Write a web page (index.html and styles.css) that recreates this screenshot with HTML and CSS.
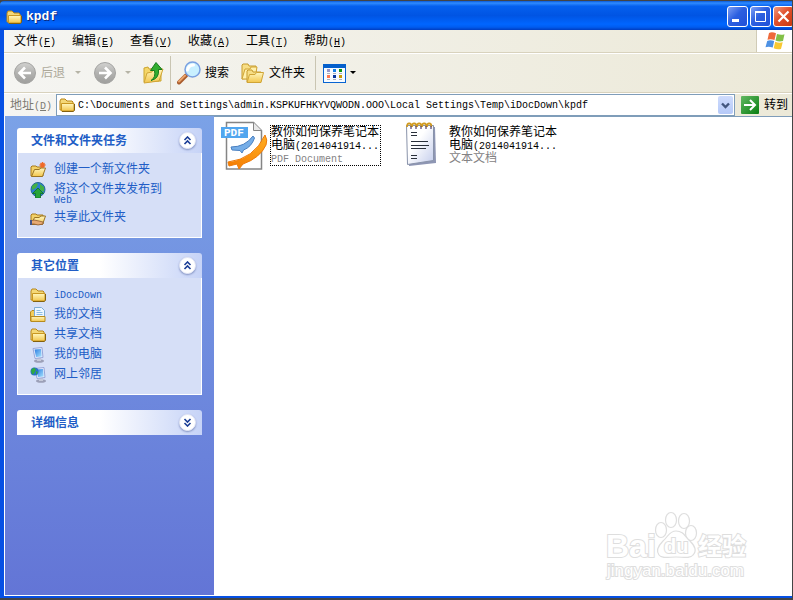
FILE: index.html
```html
<!DOCTYPE html>
<html lang="zh-CN">
<head>
<meta charset="utf-8">
<title>kpdf</title>
<link rel="stylesheet" href="styles.css">
</head>
<body>
<svg class="defs" aria-hidden="true">
  <defs>
    <linearGradient id="gold" x1="0" y1="0" x2="0" y2="1"><stop offset="0" stop-color="#fff7c0"/><stop offset="1" stop-color="#f3c64c"/></linearGradient>
    <linearGradient id="screen" x1="0" y1="0" x2="1" y2="1"><stop offset="0" stop-color="#2a7be0"/><stop offset="1" stop-color="#a8e4ff"/></linearGradient>
    <linearGradient id="grey" x1="0" y1="0" x2="0" y2="1"><stop offset="0" stop-color="#d2d2d0"/><stop offset=".5" stop-color="#b2b2b0"/><stop offset="1" stop-color="#9e9e9c"/></linearGradient>
    <linearGradient id="orange" x1="0" y1="1" x2="1" y2="0"><stop offset="0" stop-color="#f47a00"/><stop offset="1" stop-color="#ffac20"/></linearGradient>
    <linearGradient id="go" x1="0" y1="0" x2="1" y2="1"><stop offset="0" stop-color="#62b862"/><stop offset="1" stop-color="#087e10"/></linearGradient>
    <linearGradient id="pad" x1="0" y1="0" x2="1" y2="1"><stop offset=".4" stop-color="#fff"/><stop offset="1" stop-color="#c4cdec"/></linearGradient>
    <symbol id="folder" viewBox="0 0 16 16">
      <path d="M1 13V4l1-2h4l2 2h5l1 1v8z" fill="#f4d878" stroke="#b88618"/>
      <path d="M2.500 6.500h12.500v6.500l-1 1H2.500z" fill="url(#gold)" stroke="#c99721"/>
      <path d="M3 14.500h11.500l1-1V7" fill="none" stroke="#84610f"/>
    </symbol>
    <symbol id="openfolder" viewBox="0 0 16 16">
      <path d="M1 14V5l1-1h4l1 1h6v9z" fill="#f2d168" stroke="#a97a1a"/>
      <path d="M1.500 14.500l3-7H9l2-1.500h4.500l-3 8.500z" fill="url(#gold)" stroke="#9a7425"/>
    </symbol>
    <symbol id="up" viewBox="0 0 9 9"><path d="M1.500 4l3-3 3 3M1.500 8l3-3 3 3" fill="none" stroke="#1a3d96" stroke-width="1.600"/></symbol>
    <symbol id="down" viewBox="0 0 9 9"><path d="M1.500 1l3 3 3-3M1.500 5l3 3 3-3" fill="none" stroke="#1a3d96" stroke-width="1.600"/></symbol>
    <symbol id="monitor" viewBox="0 0 16 16">
      <ellipse cx="9" cy="14" rx="5" ry="1.800" fill="#9ca0b8"/>
      <path d="M7 10l4 1v3H7z" fill="#c6cada"/>
      <path d="M3 1.500l9-1 1 10-8 1z" fill="#e9efff" stroke="#98a6d8"/>
      <path d="M4.500 2.500l6.500-.6.7 7.500-5.700.7z" fill="url(#screen)"/>
    </symbol>
  </defs>
</svg>
<div class="window">
  <header class="titlebar">
    <svg class="i16"><use href="#folder"/></svg>
    <h1>kpdf</h1>
    <div class="controls">
      <button class="ctl" aria-label="最小化"><svg viewBox="0 0 19 19"><path d="M4 12h7v3H4z" fill="#fff"/></svg></button>
      <button class="ctl" aria-label="最大化"><svg viewBox="0 0 19 19"><path d="M4.500 5h10v9.500h-10z" fill="none" stroke="#fff"/><path d="M4 4h11v2H4z" fill="#fff"/></svg></button>
      <button class="ctl close" aria-label="关闭"><svg viewBox="0 0 19 19"><path d="M4.500 4.500l10 10M14.500 4.500l-10 10" stroke="#fff" stroke-width="2.200"/></svg></button>
    </div>
  </header>

  <div class="client">
    <nav class="menubar">
      <button>文件<span class="lat">(<u>F</u>)</span></button>
      <button>编辑<span class="lat">(<u>E</u>)</span></button>
      <button>查看<span class="lat">(<u>V</u>)</span></button>
      <button>收藏<span class="lat">(<u>A</u>)</span></button>
      <button>工具<span class="lat">(<u>T</u>)</span></button>
      <button>帮助<span class="lat">(<u>H</u>)</span></button>
      <div class="flag">
        <svg viewBox="0 0 20 18">
          <path d="M4 1q3-1.500 7 .3L9.500 8q-4-1.500-7-.2z" fill="#ee6a3c"/>
          <path d="M12 2q4 1.500 7.500.3L18 9q-4 1-7.500-.5z" fill="#82c048"/>
          <path d="M2.200 9q3-1.500 7 .1L7.700 15.500q-4-1.500-7.200-.3z" fill="#4d91e4"/>
          <path d="M10.200 9.800q4 1.500 7.500.5L16 17q-4 1-7.300-.8z" fill="#f8c832"/>
        </svg>
      </div>
    </nav>

    <div class="toolbar">
      <button class="tool dim" disabled>
        <svg class="i24" viewBox="0 0 24 24"><circle cx="12" cy="12" r="10.500" fill="url(#grey)" stroke="#a4a4a2"/><path d="M18 12H7M12 6.500L6.500 12l5.500 5.500" fill="none" stroke="#fff" stroke-width="2.600"/></svg>
        后退
      </button>
      <button class="drop" aria-label="后退列表" disabled><svg viewBox="0 0 6 4"><path d="M0 0h6L3 3z" fill="#b6b4a6"/></svg></button>
      <button class="tool" aria-label="前进" disabled>
        <svg class="i24" viewBox="0 0 24 24"><circle cx="12" cy="12" r="10.500" fill="url(#grey)" stroke="#a4a4a2"/><path d="M6 12h11M12 6.500l5.500 5.500-5.500 5.500" fill="none" stroke="#fff" stroke-width="2.600"/></svg>
      </button>
      <button class="drop last" aria-label="前进列表" disabled><svg viewBox="0 0 6 4"><path d="M0 0h6L3 3z" fill="#b6b4a6"/></svg></button>
      <button class="tool parent" aria-label="向上">
        <svg class="i24" viewBox="0 0 24 24">
          <path d="M3 21V7l4-1 1 2 12-1v13z" fill="#f5d668" stroke="#cba52f"/>
          <path d="M3 22l3-10 5-1 1-2 10-1-4 12z" fill="url(#gold)" stroke="#d1a637"/>
          <path d="M10 19.500q5-3 3.500-10h-4L15 1.500l6 7h-3.500q1 9-7.500 11z" fill="#32ad30" stroke="#167c1c"/>
        </svg>
      </button>
      <span class="sep"></span>
      <button class="tool search">
        <svg class="i24" viewBox="0 0 24 24">
          <path d="M2 21.500l7-7" stroke="#a95c2c" stroke-width="4" stroke-linecap="round"/>
          <path d="M2 20.500l6-6" stroke="#eaa36b" stroke-width="2" stroke-linecap="round"/>
          <circle cx="15.500" cy="8.500" r="7.500" fill="#c9f0ff" stroke="#7aa0e0" stroke-width="1.500"/>
          <path d="M10.500 9q1-5 6-5" fill="none" stroke="#fff" stroke-width="3" stroke-linecap="round"/>
        </svg>
        搜索
      </button>
      <button class="tool folders">
        <svg class="i24" viewBox="0 0 24 24">
          <path d="M1 18V4l1-1h5l1 2h7v12z" fill="#f7de86" stroke="#c69a2c"/>
          <path d="M1 18l3-10h5l1-2h6l-2 12z" fill="#fff0ac" stroke="#d0a435"/>
          <path d="M6 21V10l1-1h4l1 2h8v9z" fill="#f7de86" stroke="#c69a2c"/>
          <path d="M6 21.500l2.500-8H14l1.500-2h7l-2.500 10z" fill="url(#gold)" stroke="#d0a435"/>
        </svg>
        文件夹
      </button>
      <span class="sep"></span>
      <button class="tool views" aria-label="查看方式">
        <svg viewBox="0 0 23 19" class="grid">
          <rect x=".5" y=".5" width="22" height="18" fill="#f7fbff" stroke="#0764d2"/><path d="M0 0h23v4H0z" fill="#0560cc"/>
          <path d="M4 5h3v3H4z" fill="#9797c8"/><path d="M10 5h3v3h-3z" fill="#1680e4"/><path d="M16 5h3v3h-3z" fill="#109410"/>
          <path d="M4 11h3v3H4z" fill="#ff7950"/><path d="M10 11h3v3h-3z" fill="#07359c"/><path d="M16 11h3v3h-3z" fill="#cc9905"/>
          <path d="M4 9.500h3m3 0h3m3 0h3M4 15.500h3m3 0h3m3 0h3" stroke="#aab0b8"/>
        </svg>
        <svg class="tri" viewBox="0 0 6 4"><path d="M0 0h6L3 3z"/></svg>
      </button>
    </div>

    <form class="address">
      <label for="path">地址<span class="lat">(<u>D</u>)</span></label>
      <div class="combo">
        <svg class="i16"><use href="#folder"/></svg>
        <input id="path" type="text" value="C:\Documents and Settings\admin.KSPKUFHKYVQWODN.OOO\Local Settings\Temp\iDocDown\kpdf">
        <button type="button" aria-label="展开"><svg viewBox="0 0 9 7"><path d="M1 1.500l3.500 3.500L8 1.500" fill="none" stroke="#43577f" stroke-width="2.400"/></svg></button>
      </div>
      <button type="button" class="goto">
        <svg viewBox="0 0 18 18"><rect width="18" height="18" rx="1" fill="url(#go)"/><path d="M3 9h11M9 4l5 5-5 5" fill="none" stroke="#fff" stroke-width="2"/></svg>
        转到
      </button>
    </form>

    <div class="content">
      <aside class="sidebar">
        <section class="panel">
          <h2>文件和文件夹任务<button aria-label="折叠"><svg><use href="#up"/></svg></button></h2>
          <ul>
            <li><svg class="i16" viewBox="0 0 16 16"><use href="#openfolder"/><path d="M12.500 0v6M9.500 3h6M10.500 1l4 4m0-4l-4 4" stroke="#f06a28" stroke-width="1.300"/></svg><a href="#">创建一个新文件夹</a></li>
            <li><svg class="i16" viewBox="0 0 16 16"><circle cx="8" cy="7.500" r="7" fill="#2b7ed0" stroke="#266a94"/><path d="M2 4q4-4 6-2l-2 4-4 2zM10 2l4 3v5l-4-2z" fill="#44b043"/><path d="M8 6l5.500 5.500h-3V16h-5v-4.500h-3z" fill="#27a436" stroke="#0c7022" stroke-width=".8"/></svg><a href="#">将这个文件夹发布到<span class="lat second">Web</span></a></li>
            <li><svg class="i16" viewBox="0 0 16 16"><use href="#openfolder"/><path d="M0 11l4-1 5 1 4 1v2l-5 1-4-1H0z" fill="#e7aa74" stroke="#8e5a34" stroke-width=".8"/><path d="M0 10h2v5H0z" fill="#44558c"/></svg><a href="#">共享此文件夹</a></li>
          </ul>
        </section>
        <section class="panel">
          <h2>其它位置<button aria-label="折叠"><svg><use href="#up"/></svg></button></h2>
          <ul>
            <li><svg class="i16"><use href="#folder"/></svg><a href="#"><span class="lat">iDocDown</span></a></li>
            <li><svg class="i16" viewBox="0 0 16 16"><path d="M.5 14V5l1.500-1.500h3V14z" fill="#f2cd5b" stroke="#b68b20"/><path d="M4.500.5h7l3 3V12h-10z" fill="#edf7ff" stroke="#7cacd8"/><path d="M6.500 3.500h4m-4 2h6m-6 2h6" stroke="#8cbce4"/><path d="M1 9.500h14v5H1z" fill="url(#gold)" stroke="#b68b20"/></svg><a href="#">我的文档</a></li>
            <li><svg class="i16"><use href="#folder"/></svg><a href="#">共享文档</a></li>
            <li><svg class="i16"><use href="#monitor"/></svg><a href="#">我的电脑</a></li>
            <li><svg class="i16" viewBox="0 0 16 16"><use href="#monitor" x="2" y="0" width="16" height="16"/><circle cx="4.500" cy="4.500" r="4" fill="#2a72c8"/><path d="M1 3l3-2.500 2 2-2 4-2 1zM6 4l2 1-2 3z" fill="#2eaa42"/></svg><a href="#">网上邻居</a></li>
          </ul>
        </section>
        <section class="panel">
          <h2>详细信息<button aria-label="展开"><svg><use href="#down"/></svg></button></h2>
        </section>
      </aside>

      <main class="files">
        <article class="file selected">
          <svg class="i48" viewBox="0 0 48 50">
            <path d="M6.500 1.500h27l8 8v38.500h-35z" fill="#fff" stroke="#858585" stroke-width="1.500"/>
            <path d="M33.500 1.500v8h8" fill="#e8e8e8" stroke="#858585"/>
            <path d="M11 26q14 0 22-11l1.500 2q-3 9-11 12l-1.500 3-2-2.500-8-.5z" fill="#76aee8" stroke="#4a80c0"/>
            <path d="M8 41q26-3 37-27 3 5 1 10-6 13-23 19l-4 5-2-5-8 2z" fill="url(#orange)" stroke="#ee7a08"/>
            <rect x="1" y="6" width="27" height="11" fill="#51a6ef"/>
            <text x="4" y="15" class="badge">PDF</text>
          </svg>
          <div class="label"><a href="#">教你如何保养笔记本<br>电脑<span class="lat">(2014041914...</span></a><small><span class="lat">PDF Document</span></small></div>
        </article>
        <article class="file">
          <svg class="i48" viewBox="0 0 48 50">
            <path d="M10 6h27l1 36-27 3z" fill="#8e96b4"/>
            <path d="M8.500 4.500h27v35l-26 4z" fill="url(#pad)" stroke="#8993aa"/>
            <path d="M13 11.500h6m-6 3h6m-6 6h17m-17 4h18m-18 3h15m-15 7h6m-6 3h6" stroke="#292f3a"/>
            <path d="M9 6q0-4 2.500-3.500T13 6m1 0q0-4 2.500-3.500T18 6m1 0q0-4 2.500-3.500T23 6m1 0q0-4 2.500-3.500T28 6m1 0q0-4 2.500-3.500T33 6" fill="none" stroke="#d09a20" stroke-width="1.800"/>
            <path d="M13 5v3m5-3v3m5-3v3m5-3v3m5-3v3" stroke="#54416f" stroke-width="1.200"/>
          </svg>
          <div class="label"><a href="#">教你如何保养笔记本<br>电脑<span class="lat">(2014041914...</span></a><small>文本文档</small></div>
        </article>
        <div class="watermark">
          <svg viewBox="0 0 146 72">
            <g fill="#fff" stroke="#dedede" stroke-width="1.200">
              <ellipse cx="57" cy="20" rx="5.500" ry="7.500"/><ellipse cx="67" cy="10" rx="5.500" ry="7.500"/><ellipse cx="80" cy="11" rx="5.500" ry="7.500"/><ellipse cx="87" cy="23" rx="5.500" ry="7.500"/>
              <path d="M72 21c8 0 9 6 14 10 5 5 7 10 3 14-3 4-10 2-17 2s-14 2-17-2c-3-4-1-9 4-14 5-4 6-10 13-10z"/>
              <text x="2" y="47" class="wm big">Bai</text>
              <text x="60" y="43" class="wm mid">du</text>
              <text x="94" y="45" class="wm cjk">经验</text>
              <text x="3" y="66" class="wm url">jingyan.baidu.com</text>
            </g>
          </svg>
        </div>
      </main>
    </div>
  </div>
</div>
</body>
</html>
```
FILE: styles.css
```css
* { box-sizing: border-box; }

body {
  margin: 0;
  background: #444;
  color: #000;
  font: 12px/16px "Liberation Sans", "Noto Sans CJK SC", sans-serif;
}

button {
  margin: 0;
  padding: 0;
  border: 0;
  background: none;
  color: inherit;
  font: inherit;
  white-space: nowrap;
}

svg { display: block; flex: none; }
a { color: inherit; text-decoration: none; }

.defs { position: absolute; width: 0; height: 0; }
.lat { font: 10px/10px "Liberation Mono", monospace; }
.i16 { width: 16px; height: 16px; }
.i24 { width: 24px; height: 24px; }
.i48 { width: 48px; height: 50px; }

.window {
  display: flex;
  flex-direction: column;
  height: 100vh;
  padding: 1px 1px 2px 0;
}

/* Title bar */
.titlebar {
  display: flex;
  align-items: center;
  flex: none;
  height: 29px;
  padding: 2px 0 0 6px;
  overflow: hidden;
  border-radius: 4px 0 0 0;
  background: linear-gradient(#0a5ad8, #2f8bff 7%, #0560ee 18%, #0054e3 50%, #0066ff 80%, #005cf0 90%, #003dc0);
}

.titlebar h1 {
  flex: 1;
  margin: 0 0 0 4px;
  color: #fff;
  font: bold 13px/16px "Liberation Mono", monospace;
  text-shadow: 1px 1px #0a2a80;
}

.controls { display: flex; gap: 2px; margin-right: -2px; }

.ctl {
  width: 21px;
  height: 21px;
  border: 1px solid #fff;
  border-radius: 3px;
  background: linear-gradient(135deg, #7e9ff4, #2c5fe0 45%, #1f4fd8);
}

.ctl.close { background: linear-gradient(135deg, #f09a80, #e0502c 45%, #c8380f); }

/* Window frame round the bars and the content */
.client {
  display: flex;
  flex: 1;
  flex-direction: column;
  min-height: 0;
  border-left: 4px solid #0650e4;
  border-bottom: 2px solid #0650e4;
}

/* Menu, toolbar and address bar */
.menubar, .toolbar, .address {
  display: flex;
  flex: none;
  align-items: center;
  background: linear-gradient(90deg, #f5f5f2, #ece9d8);
}

.menubar {
  height: 23px;
  padding-left: 2px;
  border-bottom: 1px solid #d8d2bd;
}

.menubar button { width: 58px; height: 22px; padding-left: 8px; text-align: left; }

.flag {
  display: flex;
  align-items: center;
  justify-content: center;
  align-self: stretch;
  width: 36px;
  margin-left: auto;
  border-left: 1px solid #d0cbb6;
  background: #fff;
}

.flag svg { width: 20px; height: 18px; }

.toolbar {
  height: 40px;
  padding-left: 9px;
  border-top: 1px solid #fff;
  border-bottom: 1px solid #d8d2bd;
}

.tool { display: flex; align-items: center; gap: 4px; height: 32px; }
.dim { color: #aca899; }
.drop { width: 6px; margin: 0 12px 0 10px; }
.drop.last { margin: 0 10px 0 8px; }
.drop svg, .tri { width: 6px; height: 4px; }
.parent { margin-right: 5px; }
.sep { width: 1px; height: 34px; background: #c9c5b2; }
.search { margin: 0 12px 0 6px; }
.folders { margin-right: 10px; }
.views { margin-left: 7px; }
.grid { width: 23px; height: 19px; }

.address {
  height: 23px;
  padding: 0 4px 0 6px;
  border-top: 1px solid #fff;
}

.address label { width: 46px; color: #7d7b72; white-space: nowrap; }

.combo {
  display: flex;
  flex: 1;
  align-items: center;
  height: 22px;
  padding: 1px 1px 1px 2px;
  border: 1px solid #7f9db9;
  background: #fff;
}

.combo input {
  flex: 1;
  min-width: 0;
  padding: 2px 0 0 3px;
  border: 0;
  outline: 0;
  background: none;
  font: 10px/16px "Liberation Mono", monospace;
}

.combo button {
  display: grid;
  place-items: center;
  width: 15px;
  height: 18px;
  border-radius: 2px;
  background: linear-gradient(#cfdcfd, #b5c9f8);
}

.combo button svg { width: 9px; height: 7px; }
.goto { display: flex; align-items: center; gap: 5px; margin-left: 6px; }
.goto svg { width: 18px; height: 18px; }

/* Task pane */
.content {
  display: flex;
  flex: 1;
  min-height: 0;
  background: #fff;
}

.sidebar {
  display: flex;
  flex-direction: column;
  gap: 15px;
  width: 210px;
  padding: 12px 12px 0;
  border-left: 1px solid #fff;
  border-bottom: 1px solid #fff;
  background: linear-gradient(#7ba2e7, #6375d6);
}

.panel { color: #215dc6; }

.panel h2 {
  display: flex;
  align-items: center;
  justify-content: space-between;
  height: 25px;
  margin: 0;
  padding: 0 6px 0 14px;
  border-radius: 3px 3px 0 0;
  background: linear-gradient(90deg, #fff 45%, #c6d3f7);
  font-size: 12px;
  font-weight: bold;
}

.panel h2 button {
  display: grid;
  place-items: center;
  width: 17px;
  height: 17px;
  border: 1px solid #e3e7f6;
  border-radius: 50%;
  background: #fff;
  box-shadow: 0 1px 2px #8090c0;
}

.panel h2 svg { width: 9px; height: 9px; }

.panel ul {
  display: flex;
  flex-direction: column;
  gap: 4px;
  margin: 0;
  padding: 8px 8px 12px 12px;
  border: 1px solid #fff;
  border-top: 0;
  background: #d6dff7;
  list-style: none;
}

.panel li { display: flex; gap: 8px; }
.panel li svg { margin: 1px 0 -1px; }
.second { display: block; line-height: 8px; }

/* File list */
.files {
  position: relative;
  display: flex;
  flex: 1;
  align-items: flex-start;
  padding: 4px 6px;
  border-top: 1px solid #7f9db9;
}

.file { display: flex; align-items: flex-start; gap: 2px; width: 178px; }

.label {
  margin-top: 4px;
  padding-right: 1px;
  border: 1px solid transparent;
  line-height: 13px;
  white-space: nowrap;
}

.label a, .label small { display: block; }
.label small { color: #848284; font-size: 12px; }
.selected .label { border: 1px dotted #000; }
.badge { fill: #fff; stroke: none; font: bold 11px "Liberation Mono", monospace; }

.watermark { position: absolute; right: 42px; bottom: 14px; }
.watermark svg { width: 146px; height: 72px; overflow: visible; }
.wm { paint-order: stroke; stroke-width: 2px; }
.big { font: bold 32px "Liberation Sans", sans-serif; }
.mid { font: bold 20px "Liberation Sans", sans-serif; }
.cjk { font: bold 24px "Liberation Sans", "Noto Sans CJK SC", sans-serif; }
.url { font: 17px "Liberation Sans", sans-serif; }
```
